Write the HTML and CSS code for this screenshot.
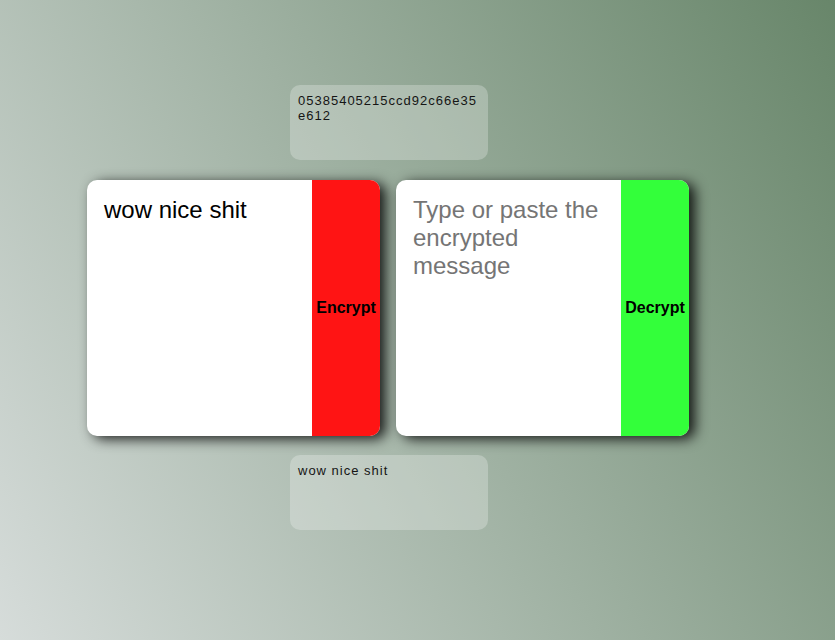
FILE: index.html
```html
<!DOCTYPE html>
<html>
<head>
<meta charset="utf-8">
<link rel="stylesheet" href="styles.css">
</head>
<body>
<main class="page">
  <div class="output-box">05385405215ccd92c66e35e612</div>
  <div class="cards">
    <section class="card">
      <div class="card-text">wow nice shit</div>
      <div class="card-action encrypt">Encrypt</div>
    </section>
    <section class="card">
      <div class="card-text placeholder">Type or paste the encrypted message</div>
      <div class="card-action decrypt">Decrypt</div>
    </section>
  </div>
  <div class="output-box">wow nice shit</div>
</main>
</body>
</html>
```
FILE: styles.css
```css
html, body {
  margin: 0;
  height: 100%;
}
body {
  background: linear-gradient(60deg, #d6dcda 0%, #68866a 100%);
  font-family: "Liberation Sans", Arial, sans-serif;
  overflow: hidden;
}
.page {
  width: 602px;
  padding: 85px 0 0 87px;
  display: flex;
  flex-direction: column;
  align-items: center;
}
.output-box {
  box-sizing: border-box;
  width: 198px;
  height: 75px;
  margin-left: 2px;
  padding: 8px;
  border-radius: 10px;
  background: rgba(255, 255, 255, 0.25);
  font-size: 13px;
  line-height: 15px;
  letter-spacing: 1px;
  color: #151515;
  word-break: break-all;
}
.cards {
  display: flex;
  gap: 16px;
  margin: 20px 0 19px;
}
.card {
  width: 293px;
  height: 256px;
  display: flex;
  border-radius: 10px;
  overflow: hidden;
  background: #fff;
  box-shadow: 6px 3px 13px rgba(0, 0, 0, 0.85);
}
.card-text {
  flex: 1;
  padding: 16px 16px 16px 17px;
  font-size: 24px;
  line-height: 28px;
  color: #000;
}
.card-text.placeholder {
  color: #757575;
}
.card-action {
  width: 68px;
  display: flex;
  align-items: center;
  justify-content: center;
  font-size: 16px;
  font-weight: bold;
  color: #000;
}
.encrypt { background: #ff1414; }
.decrypt { background: #33ff3a; }
```
